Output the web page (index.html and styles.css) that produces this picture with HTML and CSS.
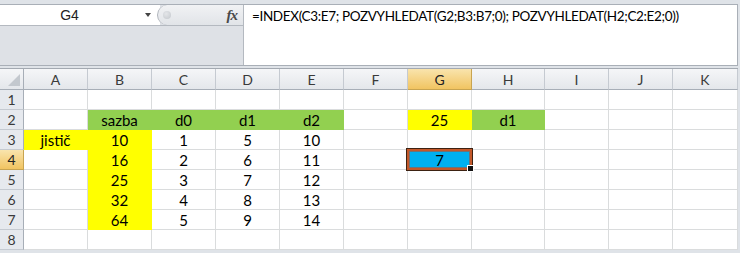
FILE: index.html
```html
<!DOCTYPE html>
<html lang="cs">
<head>
    <meta charset="UTF-8">
    <title>Sešit</title>
    <link rel="stylesheet" href="styles.css">
</head>
<body>
    <div class="formula-bar">
        <div class="left">
            <div class="top-row">
                <div class="name-box">
                    <span class="name">G4</span>
                    <span class="arrow"></span>
                </div>
                <div class="tools">
                    <span class="grip"></span>
                    <span class="fx">fx</span>
                </div>
            </div>
        </div>
        <div class="formula">=INDEX(C3:E7; POZVYHLEDAT(G2;B3:B7;0); POZVYHLEDAT(H2;C2:E2;0))</div>
    </div>
    <div class="spacer"></div>

    <div class="sheet">
        <!-- column headers -->
        <div class="corner"><span class="tri"></span></div>
        <div class="col">A</div><div class="col">B</div><div class="col">C</div><div class="col">D</div>
        <div class="col">E</div><div class="col">F</div><div class="col sel">G</div><div class="col">H</div>
        <div class="col">I</div><div class="col">J</div><div class="col">K</div>

        <!-- row 1 -->
        <div class="row">1</div>
        <div class="cell"></div><div class="cell"></div><div class="cell"></div><div class="cell"></div>
        <div class="cell"></div><div class="cell"></div><div class="cell"></div><div class="cell"></div>
        <div class="cell"></div><div class="cell"></div><div class="cell"></div>

        <!-- row 2 -->
        <div class="row">2</div>
        <div class="cell"></div><div class="cell green">sazba</div><div class="cell green">d0</div><div class="cell green">d1</div>
        <div class="cell green">d2</div><div class="cell"></div><div class="cell yellow">25</div><div class="cell green">d1</div>
        <div class="cell"></div><div class="cell"></div><div class="cell"></div>

        <!-- row 3 -->
        <div class="row">3</div>
        <div class="cell yellow">jistič</div><div class="cell yellow">10</div><div class="cell">1</div><div class="cell">5</div>
        <div class="cell">10</div><div class="cell"></div><div class="cell"></div><div class="cell"></div>
        <div class="cell"></div><div class="cell"></div><div class="cell"></div>

        <!-- row 4 -->
        <div class="row sel">4</div>
        <div class="cell"></div><div class="cell yellow">16</div><div class="cell">2</div><div class="cell">6</div>
        <div class="cell">11</div><div class="cell"></div><div class="cell blue active">7</div><div class="cell"></div>
        <div class="cell"></div><div class="cell"></div><div class="cell"></div>

        <!-- row 5 -->
        <div class="row">5</div>
        <div class="cell"></div><div class="cell yellow">25</div><div class="cell">3</div><div class="cell">7</div>
        <div class="cell">12</div><div class="cell"></div><div class="cell"></div><div class="cell"></div>
        <div class="cell"></div><div class="cell"></div><div class="cell"></div>

        <!-- row 6 -->
        <div class="row">6</div>
        <div class="cell"></div><div class="cell yellow">32</div><div class="cell">4</div><div class="cell">8</div>
        <div class="cell">13</div><div class="cell"></div><div class="cell"></div><div class="cell"></div>
        <div class="cell"></div><div class="cell"></div><div class="cell"></div>

        <!-- row 7 -->
        <div class="row">7</div>
        <div class="cell"></div><div class="cell yellow">64</div><div class="cell">5</div><div class="cell">9</div>
        <div class="cell">14</div><div class="cell"></div><div class="cell"></div><div class="cell"></div>
        <div class="cell"></div><div class="cell"></div><div class="cell"></div>

        <!-- row 8 -->
        <div class="row">8</div>
        <div class="cell"></div><div class="cell"></div><div class="cell"></div><div class="cell"></div>
        <div class="cell"></div><div class="cell"></div><div class="cell"></div><div class="cell"></div>
        <div class="cell"></div><div class="cell"></div><div class="cell"></div>
    </div>
</body>
</html>
```

FILE: styles.css
```css
body {
    margin: 0;
    padding-top: 4px;
    width: 740px;
    height: 253px;
    overflow: hidden;
    background-color: #dfe3e8;
    font-family: Lato, "Open Sans", sans-serif;
    font-size: 15px;
    color: #000;
}

/* formula bar */
.formula-bar {
    display: flex;
    width: 738px;
    height: 62px;
    box-sizing: border-box;
    border-top: 1px solid #a9afb7;
    border-bottom: 1px solid #a9afb7;
}
.left {
    width: 244px;
    flex-shrink: 0;
    background-color: #dee1e6;
    border-right: 1px solid #b4b9c0;
    box-sizing: border-box;
}
.top-row {
    display: flex;
    height: 20px;
    border-bottom: 1px solid #b4b9c0;
}
.name-box {
    display: flex;
    align-items: center;
    width: 160px;
    background-color: #fff;
    margin-right: -3px;
}
.name {
    flex: 1;
    text-align: center;
    padding-right: 6px;
    font-family: "Liberation Sans", Arial, sans-serif;
    font-size: 14px;
    color: #222;
}
.arrow {
    width: 0;
    height: 0;
    margin-right: 9px;
    border-left: 3.5px solid transparent;
    border-right: 3.5px solid transparent;
    border-top: 4px solid #444;
}
.tools {
    display: flex;
    align-items: center;
    flex: 1;
    background: linear-gradient(#f1f2f4, #e1e4e8);
    border-left: 1px solid #aeb3ba;
    border-radius: 10px 0 0 10px;
}
.grip {
    width: 8px;
    height: 8px;
    margin-left: 5px;
    border-radius: 50%;
    background: radial-gradient(circle at 40% 35%, #e4e6e9, #c3c7cc);
}
.fx {
    margin-left: auto;
    margin-right: 6px;
    font-family: "Liberation Serif", serif;
    font-style: italic;
    font-weight: bold;
    font-size: 15px;
    color: #4a4a4a;
    letter-spacing: -1px;
}
.formula {
    flex: 1;
    background-color: #fff;
    border-right: 1px solid #a9afb7;
    padding: 3px 0 0 8px;
    font-size: 13.5px;
    letter-spacing: -0.35px;
    white-space: nowrap;
}

.spacer {
    height: 2px;
}

/* sheet grid */
.sheet {
    display: grid;
    grid-template-columns: 24px repeat(7, 64px) 73px 64px 64px 65px;
    grid-template-rows: 21px repeat(8, 20px);
    width: 738px;
    border-top: 1px solid #a3a9b1;
    background-color: #fff;
}
.corner,
.col,
.row {
    box-sizing: border-box;
    background: linear-gradient(#f5f6f8, #e4e7eb);
    border-right: 1px solid #c5cad1;
    border-bottom: 1px solid #a7aeb7;
    color: #3a3a3a;
    font-size: 14px;
    display: flex;
    align-items: center;
    justify-content: center;
}
.row {
    background: #e6e9ee;
    border-bottom: 1px solid #c5cad1;
    border-right: 1px solid #a7aeb7;
}
.corner {
    position: relative;
    border-right: 1px solid #a7aeb7;
}
.tri {
    position: absolute;
    right: 3px;
    bottom: 3px;
    width: 0;
    height: 0;
    border-left: 12px solid transparent;
    border-bottom: 12px solid #c3c8ce;
}
.col.sel,
.row.sel {
    background: linear-gradient(#f9e4ad, #f1c461);
    border-right-color: #c8a450;
    border-bottom-color: #c8a450;
    color: #222;
}

.cell {
    box-sizing: border-box;
    border-right: 1px solid #dadcdd;
    border-bottom: 1px solid #dadcdd;
    display: flex;
    align-items: center;
    justify-content: center;
}
.green {
    background-color: #92d050;
    border-color: #92d050;
}
.yellow {
    background-color: #ffff00;
    border-color: #ffff00;
}
.blue {
    background-color: #00b0f0;
}
.active {
    position: relative;
}
.active::after {
    content: "";
    position: absolute;
    top: -1px;
    left: -1px;
    right: -1px;
    bottom: -1px;
    border: 2px solid #c3582a;
    box-shadow: 0 0 0 1px #3d2212, inset 0 0 0 1px #6f7378;
}
.active::before {
    content: "";
    position: absolute;
    right: -3px;
    bottom: -3px;
    width: 5px;
    height: 5px;
    background-color: #111;
    border: 1px solid #fff;
    z-index: 2;
}
```
